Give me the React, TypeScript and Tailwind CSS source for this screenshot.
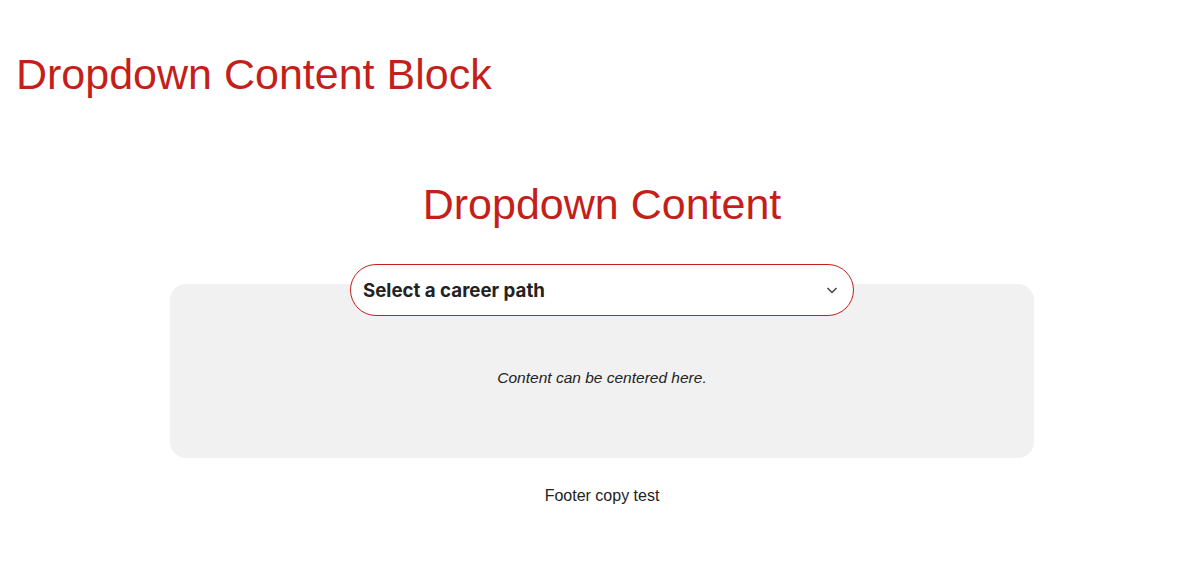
import React from "react";

export default function App() {
  return (
    <div className="min-h-[572px] bg-white text-[#222]" style={{ fontFamily: "'Liberation Sans', Arial, sans-serif" }}>
      <h1 className="pl-4 pt-[46px] text-[43px] leading-[56px] text-[#c41f1a]">Dropdown Content Block</h1>
      <div className="mx-auto mt-[74px] flex w-[864px] translate-x-1 flex-col items-center">
        <h2 className="text-[43px] leading-[56px] text-[#c41f1a]">Dropdown Content</h2>
        <div className="relative z-10 mt-[32px] flex h-[52px] w-[504px] items-center justify-between rounded-full border border-[#c41f1a] bg-white pl-3 pr-[14px]">
          <span className="pt-[3px] font-['Inter',sans-serif] text-[18.7px] font-bold text-[#222]">Select a career path</span>
          <svg width="14" height="14" viewBox="0 0 14 14" fill="none" stroke="#444" strokeWidth="1.5">
            <path d="M2.5 5 L7 9.5 L11.5 5" />
          </svg>
        </div>
        <div className="-mt-8 flex h-[174px] w-full items-center justify-center rounded-2xl bg-[#f1f1f1] pt-[14px]">
          <p className="text-[15.5px] italic text-[#222]">Content can be centered here.</p>
        </div>
        <p className="mt-[26px] text-[16px] text-[#222]">Footer copy test</p>
      </div>
    </div>
  );
}
